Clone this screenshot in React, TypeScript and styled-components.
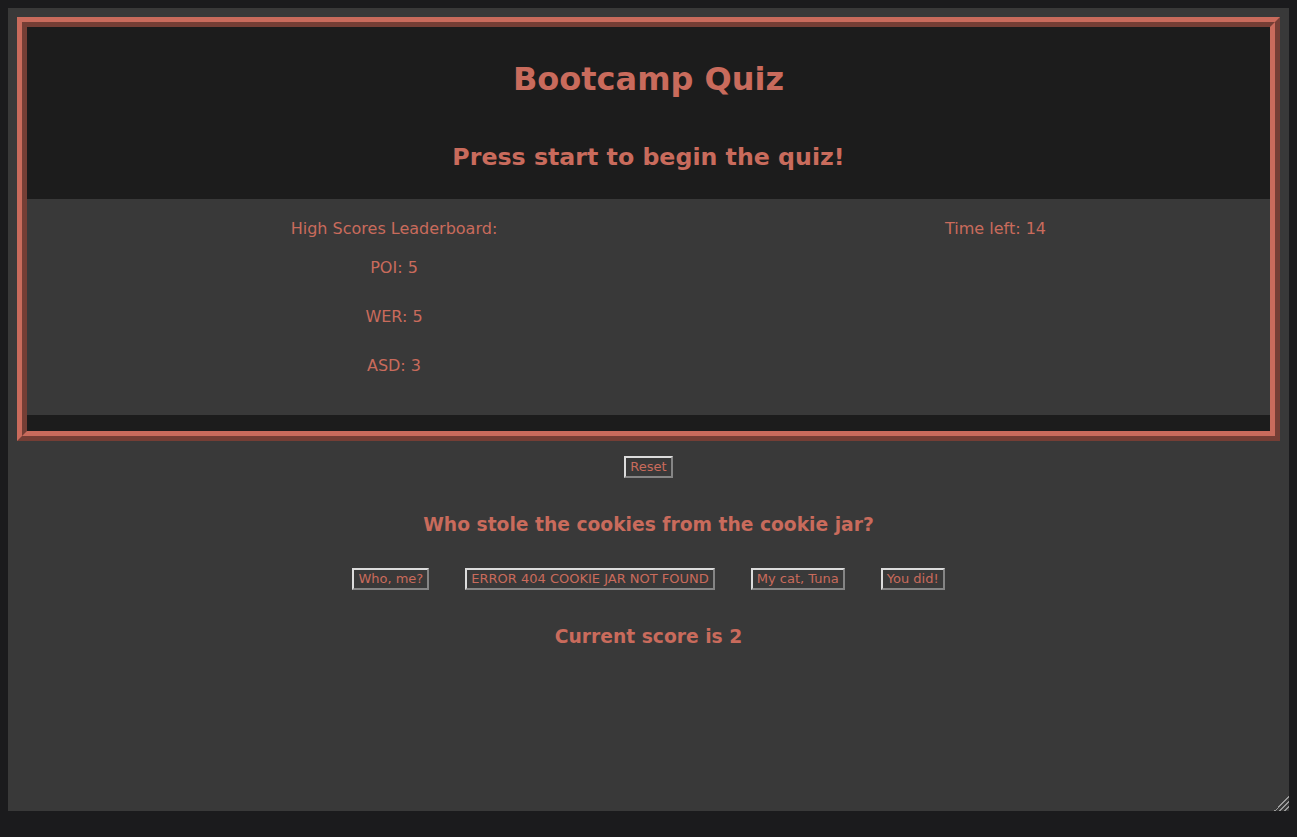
import React from "react";
import styled, { createGlobalStyle } from "styled-components";

const accent = "#c96b5c";

const Global = createGlobalStyle`
  html, body { background: #1b1b1d; }
  body {
    margin: 8px;
    font-family: "DejaVu Sans", Verdana, sans-serif;
    color: ${accent};
  }
`;

const Page = styled.div`
  box-sizing: border-box;
  height: 803px;
  padding: 9px;
  background: #393939;
  resize: both;
  overflow: auto;
  box-shadow: 0 3px 6px rgba(0, 0, 0, 0.45);

  &::-webkit-resizer {
    background: linear-gradient(
      135deg,
      transparent 0 50%,
      #9a9a9a 50% 56%,
      transparent 56% 66%,
      #9a9a9a 66% 72%,
      transparent 72% 82%,
      #9a9a9a 82% 88%,
      transparent 88%
    );
  }
`;

const Frame = styled.section`
  border: 10px ridge ${accent};
  background: #1c1c1c;
  padding-bottom: 16px;
`;

const Header = styled.header`
  height: 172px;
  display: flex;
  flex-direction: column;
  align-items: center;
`;

const Title = styled.h1`
  margin: 35px 0 0;
  font-size: 32px;
  line-height: 34px;
  font-weight: bold;
`;

const Subtitle = styled.h2`
  margin: 48px 0 0;
  font-size: 23.7px;
  line-height: 26px;
  font-weight: bold;
`;

const Board = styled.div`
  height: 216px;
  background: #393939;
  display: grid;
  grid-template-columns: 694px 1fr;
  font-size: 16px;
`;

const Column = styled.div<{ $inset?: number }>`
  padding-left: ${(p) => p.$inset ?? 0}px;
  padding-top: 20px;
  display: flex;
  flex-direction: column;
  align-items: center;
`;

const Label = styled.div`
  line-height: 20px;
`;

const ScoreList = styled.ul`
  list-style: none;
  margin: 19px 0 0;
  padding: 0;
  display: flex;
  flex-direction: column;
  align-items: center;
  gap: 29px;
`;

const ScoreItem = styled.li`
  line-height: 20px;
`;

const Controls = styled.div`
  display: flex;
  flex-direction: column;
  align-items: center;
  padding-top: 15px;
`;

const Button = styled.button`
  font-family: "DejaVu Sans", Verdana, sans-serif;
  font-size: 13px;
  line-height: 16px;
  color: ${accent};
  background: transparent;
  border-width: 2px;
  border-style: solid;
  border-color: #dcdcdc #858585 #858585 #dcdcdc;
  padding: 1px 4px;
  cursor: pointer;
`;

const Question = styled.h3`
  margin: 36px 0 0;
  font-size: 18.7px;
  line-height: 22px;
  font-weight: bold;
`;

const Answers = styled.div`
  display: flex;
  gap: 36px;
  margin-top: 32px;
`;

const Score = styled.h3`
  margin: 36px 0 0;
  font-size: 18.7px;
  line-height: 22px;
  font-weight: bold;
`;

const scores = [
  { name: "POI", value: 5 },
  { name: "WER", value: 5 },
  { name: "ASD", value: 3 },
];

const answers = ["Who, me?", "ERROR 404 COOKIE JAR NOT FOUND", "My cat, Tuna", "You did!"];

export default function App() {
  return (
    <>
      <Global />
      <Page>
        <Frame>
          <Header>
            <Title>Bootcamp Quiz</Title>
            <Subtitle>Press start to begin the quiz!</Subtitle>
          </Header>
          <Board>
            <Column $inset={40}>
              <Label>High Scores Leaderboard:</Label>
              <ScoreList>
                {scores.map((s) => (
                  <ScoreItem key={s.name}>
                    {s.name}: {s.value}
                  </ScoreItem>
                ))}
              </ScoreList>
            </Column>
            <Column>
              <Label>Time left: 14</Label>
            </Column>
          </Board>
        </Frame>
        <Controls>
          <Button>Reset</Button>
          <Question>Who stole the cookies from the cookie jar?</Question>
          <Answers>
            {answers.map((a) => (
              <Button key={a}>{a}</Button>
            ))}
          </Answers>
          <Score>Current score is 2</Score>
        </Controls>
      </Page>
    </>
  );
}
